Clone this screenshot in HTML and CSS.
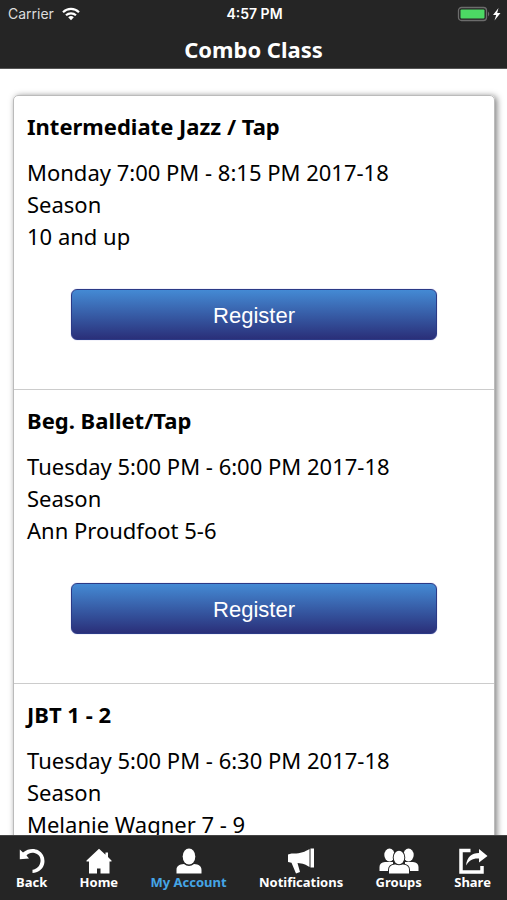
FILE: index.html
```html
<!DOCTYPE html>
<html lang="en">
<head>
<meta charset="utf-8">
<meta name="viewport" content="width=device-width, initial-scale=1">
<title>Combo Class</title>
<link rel="stylesheet" href="styles.css">
</head>
<body>
<header class="top">
  <div class="status">
    <div class="carrier">
      <span>Carrier</span>
      <svg width="18" height="14" viewBox="0 0 18 14" aria-hidden="true"><g fill="none" stroke="#fff" stroke-width="2.2"><path d="M1 5.200a11.500 11.500 0 0 1 16 0"/><path d="M4 8.300a7.300 7.300 0 0 1 10 0"/></g><path d="M9 13.200L6.200 10.300a4 4 0 0 1 5.600 0z" fill="#fff"/></svg>
    </div>
    <time class="clock">4:57 PM</time>
    <div class="power">
      <svg width="44" height="16" viewBox="0 0 44 16" aria-hidden="true"><rect x="1.500" y="1.500" width="28" height="13" rx="3" fill="none" stroke="#6c6c6c" stroke-width="1.300"/><rect x="3.500" y="3.500" width="24" height="9" rx="1" fill="#4cd964"/><path d="M31 5.500q2.500 2.500 0 5z" fill="#6c6c6c"/><path d="M41.500 2L36 9h3.200L37.500 14.500 43.500 7h-3.300z" fill="#fff"/></svg>
    </div>
  </div>
  <h1 class="title">Combo Class</h1>
</header>
<main class="content">
  <div class="card">
    <section class="class-item">
      <h2 class="name">Intermediate Jazz / Tap</h2>
      <p class="details">Monday 7:00 PM - 8:15 PM 2017-18 Season<br>10 and up</p>
      <button class="register" type="button">Register</button>
    </section>
    <section class="class-item">
      <h2 class="name">Beg. Ballet/Tap</h2>
      <p class="details">Tuesday 5:00 PM - 6:00 PM 2017-18 Season<br>Ann Proudfoot 5-6</p>
      <button class="register" type="button">Register</button>
    </section>
    <section class="class-item">
      <h2 class="name">JBT 1 - 2</h2>
      <p class="details">Tuesday 5:00 PM - 6:30 PM 2017-18 Season<br>Melanie Wagner 7 - 9</p>
      <button class="register" type="button">Register</button>
    </section>
  </div>
</main>
<nav class="tabs">
  <a class="tab" href="#back">
    <svg width="26" height="26" viewBox="0 0 26 26" aria-hidden="true"><path d="M4 4.500C9 .5 15 0 19.500 2.500 24.500 5.500 26.500 11 25 16.500 23.500 21.500 19 24.800 13.500 25V21.800C18 21 21 18 21.500 13.500 22 9 19.500 6 15.500 5 12.500 4.300 9.500 5 7.500 7.500L10 10.500.8 11.300V1.500z" fill="#fff"/></svg>
    <span>Back</span>
  </a>
  <a class="tab" href="#home">
    <svg width="26" height="26" viewBox="0 0 26 26" aria-hidden="true"><path d="M13 .8L.500 12.500V13.500H3V25.500H11V20.500h3.500v5H23.500V13.500h2v-1L22 9V4.500h-2.500v2.200z" fill="#fff"/></svg>
    <span>Home</span>
  </a>
  <a class="tab active" href="#account">
    <svg width="26" height="26" viewBox="0 0 26 26" aria-hidden="true"><ellipse cx="13" cy="8.500" rx="6.300" ry="8" fill="#fff"/><path d="M.5 25.500v-3.500c0-4 2.500-5.500 7.500-6 3 2.500 7 2.500 10 0 5 .5 7.500 2 7.500 6v3.500z" fill="#fff"/></svg>
    <span>My Account</span>
  </a>
  <a class="tab" href="#notifications">
    <svg width="28" height="26" viewBox="0 0 28 26" aria-hidden="true"><path d="M1 6.500L4.500 5.500c8 .5 13-1.500 18-4.500v18C19 16.500 16 15.500 10.500 15l2.500 9-4 1.500L4.500 14.800 1 14z" fill="#fff"/><rect x="23.500" y=".5" width="3.500" height="19" fill="#fff"/></svg>
    <span>Notifications</span>
  </a>
  <a class="tab" href="#groups">
    <svg width="40" height="26" viewBox="0 0 40 26" aria-hidden="true"><g fill="#fff"><ellipse cx="10.500" cy="7" rx="5.200" ry="6.500"/><ellipse cx="29.500" cy="7" rx="5.200" ry="6.500"/><path d="M.5 23v-4c0-3 2-4.500 5.500-5h8v9zM39.500 23v-4c0-3-2-4.500-5.500-5h-8v9z"/></g><g fill="#fff" stroke="#252525" stroke-width="2" paint-order="stroke"><path d="M10 25.500v-3.500c0-3.500 2-5 6-5.500h8c4 .5 6 2 6 5.500v3.500z"/><ellipse cx="20" cy="9.500" rx="5.300" ry="6.800"/></g></svg>
    <span>Groups</span>
  </a>
  <a class="tab" href="#share">
    <svg width="30" height="26" viewBox="0 0 30 26" aria-hidden="true"><path d="M12.500 2.500H3v21.500h21V18" fill="none" stroke="#fff" stroke-width="3.500"/><path d="M8 17.500C9 9 13.500 5 21 5V1l8.500 7L21 14.500V10.500C15 10 11 12.500 8 17.500z" fill="#fff"/></svg>
    <span>Share</span>
  </a>
</nav>
</body>
</html>
```
FILE: styles.css
```css
* {
  box-sizing: border-box;
}

body {
  margin: 0;
  height: 100vh;
  display: flex;
  flex-direction: column;
  background: #fff;
  color: #000;
  font-family: "Noto Sans", "Open Sans", sans-serif;
}

.top {
  flex: none;
  padding-bottom: 2px;
  background: #252525;
  border-bottom: 1px solid #555;
  color: #fff;
}

.status {
  display: grid;
  grid-template-columns: 1fr auto 1fr;
  align-items: center;
  height: 27px;
  padding: 0 6px 0 8px;
  font-family: Inter, "Liberation Sans", sans-serif;
  font-size: 14px;
}

.carrier {
  display: flex;
  align-items: center;
  gap: 8px;
  color: #ddd;
}

.clock {
  font-weight: 600;
}

.power {
  display: flex;
  justify-content: flex-end;
}

.title {
  margin: 0;
  padding-top: 6px;
  font-size: 22px;
  line-height: 33px;
  text-align: center;
}

.content {
  flex: 1;
  min-height: 0;
  overflow: hidden;
  padding: 26px 12px 0 13px;
}

.card {
  border: 1px solid #bbb;
  border-radius: 5px;
  box-shadow: 2px 1px 6px rgba(0, 0, 0, 0.5);
}

.class-item {
  padding: 14px 13px 49px;
  border-bottom: 1px solid #ccc;
}

.class-item:last-child {
  border-bottom: 0;
}

.name {
  margin: 0 0 14px;
  font-size: 22px;
  line-height: 32px;
}

.details {
  margin: 0 44px 37px 0;
  font-size: 22px;
  line-height: 32px;
}

.register {
  display: block;
  width: calc(100% - 88px);
  height: 51px;
  margin: 0 auto;
  padding: 2px 0 0;
  border: 1px solid #2b3a86;
  border-radius: 6px;
  background: linear-gradient(#448ad4, #2a2f79);
  box-shadow: 0 0 1px #7777d0;
  color: #fff;
  font-family: "Liberation Sans", Arial, sans-serif;
  font-size: 22px;
}

.tabs {
  flex: none;
  display: flex;
  justify-content: space-between;
  padding: 12px 16px 9px;
  border-top: 1px solid #444;
  background: #252525;
}

.tab {
  display: flex;
  flex-direction: column;
  align-items: center;
  color: #fff;
  font-size: 13px;
  font-weight: 700;
  line-height: 17px;
  text-decoration: none;
}

.active {
  color: #45a5e6;
}
```
